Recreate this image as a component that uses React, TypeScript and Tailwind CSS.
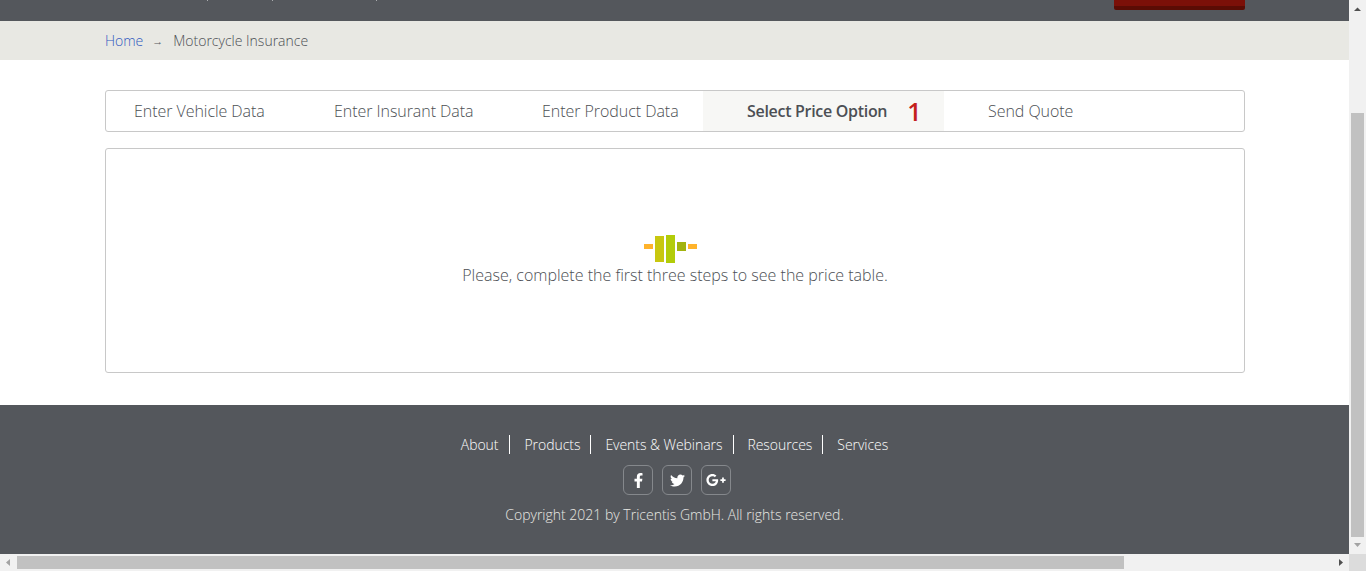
import React from "react";
import { FaFacebookF, FaTwitter, FaGooglePlusG } from "react-icons/fa";

const tabs = [
  { label: "Enter Vehicle Data", cls: "w-[200px] pl-[28px]" },
  { label: "Enter Insurant Data", cls: "w-[208px] pl-[28px]" },
  { label: "Enter Product Data", cls: "w-[189px] pl-[28px]" },
];

function Triangle({ d, fill }: { d: string; fill: string }) {
  return (
    <svg width="17" height="17" viewBox="0 0 17 17" className="block shrink-0">
      <path d={d} fill={fill} />
    </svg>
  );
}

export default function App() {
  return (
    <div className="w-[1366px] h-[571px] overflow-hidden flex flex-col font-['Open_Sans',sans-serif] text-[#4c4f54]">
      <div className="flex h-[554px]">
        <main className="w-[1349px] flex flex-col">
          <header className="h-[21px] bg-[#54575c] flex items-start pl-[105px] pr-[104px]">
            <div className="ml-[102px] w-[1px] h-[1px] bg-[#a9abae]" />
            <div className="ml-[64px] w-[1px] h-[1px] bg-[#a9abae]" />
            <div className="ml-[103px] w-[1px] h-[1px] bg-[#a9abae]" />
            <div className="ml-auto w-[131px] h-[10px] bg-[#7b1008] border-b-[4px] border-[#5a0c04] rounded-b-[2px]" />
          </header>
          <nav className="h-[39px] bg-[#e8e8e3] flex items-center pl-[105px] text-[14px] font-light">
            <a className="text-[#3058c0] tracking-[-0.03px]">Home</a>
            <span className="ml-[9px] mr-[13px] text-[11px] mt-[2px] w-[8px] text-[#54575c]">→</span>
            <span>Motorcycle Insurance</span>
          </nav>
          <section className="h-[345px] bg-white pt-[30px] pl-[105px] pr-[104px] flex flex-col gap-[16px]">
            <div className="h-[42px] border border-[#c8c8c8] rounded-[3px] flex items-stretch text-[16px] font-light">
              {tabs.map((t) => (
                <div key={t.label} className={`${t.cls} flex items-center shrink-0 tracking-[-0.05px]`}>
                  {t.label}
                </div>
              ))}
              <div className="w-[241px] bg-[#f7f7f5] flex items-center pl-[44px] shrink-0 font-semibold tracking-[-0.3px]">
                <span>Select Price Option</span>
                <span className="ml-[20px] text-[#c4201c] text-[25px] font-semibold leading-none">1</span>
              </div>
              <div className="flex items-center pl-[44px] tracking-[-0.05px]">Send Quote</div>
            </div>
            <div className="h-[225px] border border-[#c8c8c8] rounded-[3px] flex flex-col items-center pt-[86px]">
              <div className="flex items-start h-[28px] gap-[2px] ml-[-9px]">
                <div className="w-[9px] h-[5px] mt-[9px] bg-[#ffb32b]" />
                <div className="w-[9px] h-[26px] mt-[1px] bg-[#c8c70f]" />
                <div className="w-[9px] h-[28px] bg-[#b2cc09]" />
                <div className="w-[9px] h-[9px] mt-[7px] bg-[#a2b30e]" />
                <div className="w-[9px] h-[5px] mt-[9px] bg-[#ffb32b]" />
              </div>
              <p className="text-[16px] font-light leading-[24px]">
                Please, complete the first three steps to see the price table.
              </p>
            </div>
          </section>
          <footer className="h-[149px] bg-[#54575c] flex flex-col items-center pt-[30px]">
            <ul className="flex text-[14px] font-light tracking-[-0.05px] text-white leading-[19px]">
              <li className="pr-[11px] border-r border-white">About</li>
              <li className="pl-[14px] pr-[10px] border-r border-white">Products</li>
              <li className="pl-[14px] pr-[11px] border-r border-white">Events &amp; Webinars</li>
              <li className="pl-[13px] pr-[10px] border-r border-white">Resources</li>
              <li className="pl-[14px]">Services</li>
            </ul>
            <div className="flex gap-[9px] mt-[11px] pl-[5px]">
              <a className="w-[30px] h-[30px] rounded-[6px] border border-[#85888c] flex items-center justify-center text-white text-[15px]">
                <FaFacebookF />
              </a>
              <a className="w-[30px] h-[30px] rounded-[6px] border border-[#85888c] flex items-center justify-center text-white text-[15px]">
                <FaTwitter />
              </a>
              <a className="w-[30px] h-[30px] rounded-[6px] border border-[#85888c] flex items-center justify-center text-white text-[20px]">
                <FaGooglePlusG />
              </a>
            </div>
            <p className="mt-[10px] text-[14px] font-light text-[#e8e8e3] leading-[20px]">
              Copyright 2021 by Tricentis GmbH. All rights reserved.
            </p>
          </footer>
        </main>
        <aside className="w-[17px] bg-[#f1f1f1] flex flex-col">
          <Triangle d="M5 11 L8.5 7.5 L12 11 Z" fill="#505050" />
          <div className="flex-1 pt-[96px] px-[2px]">
            <div className="h-[424px] bg-[#c1c1c1]" />
          </div>
          <Triangle d="M5 6 L8.5 10 L12 6 Z" fill="#a3a3a3" />
        </aside>
      </div>
      <div className="h-[17px] bg-[#f1f1f1] flex">
        <Triangle d="M10 5 L6 8.5 L10 12 Z" fill="#a3a3a3" />
        <div className="w-[1315px] py-[2px]">
          <div className="w-[1107px] h-full bg-[#c1c1c1]" />
        </div>
        <Triangle d="M7 5 L11 8.5 L7 12 Z" fill="#505050" />
        <div className="w-[17px] bg-[#dcdcdc]" />
      </div>
    </div>
  );
}
